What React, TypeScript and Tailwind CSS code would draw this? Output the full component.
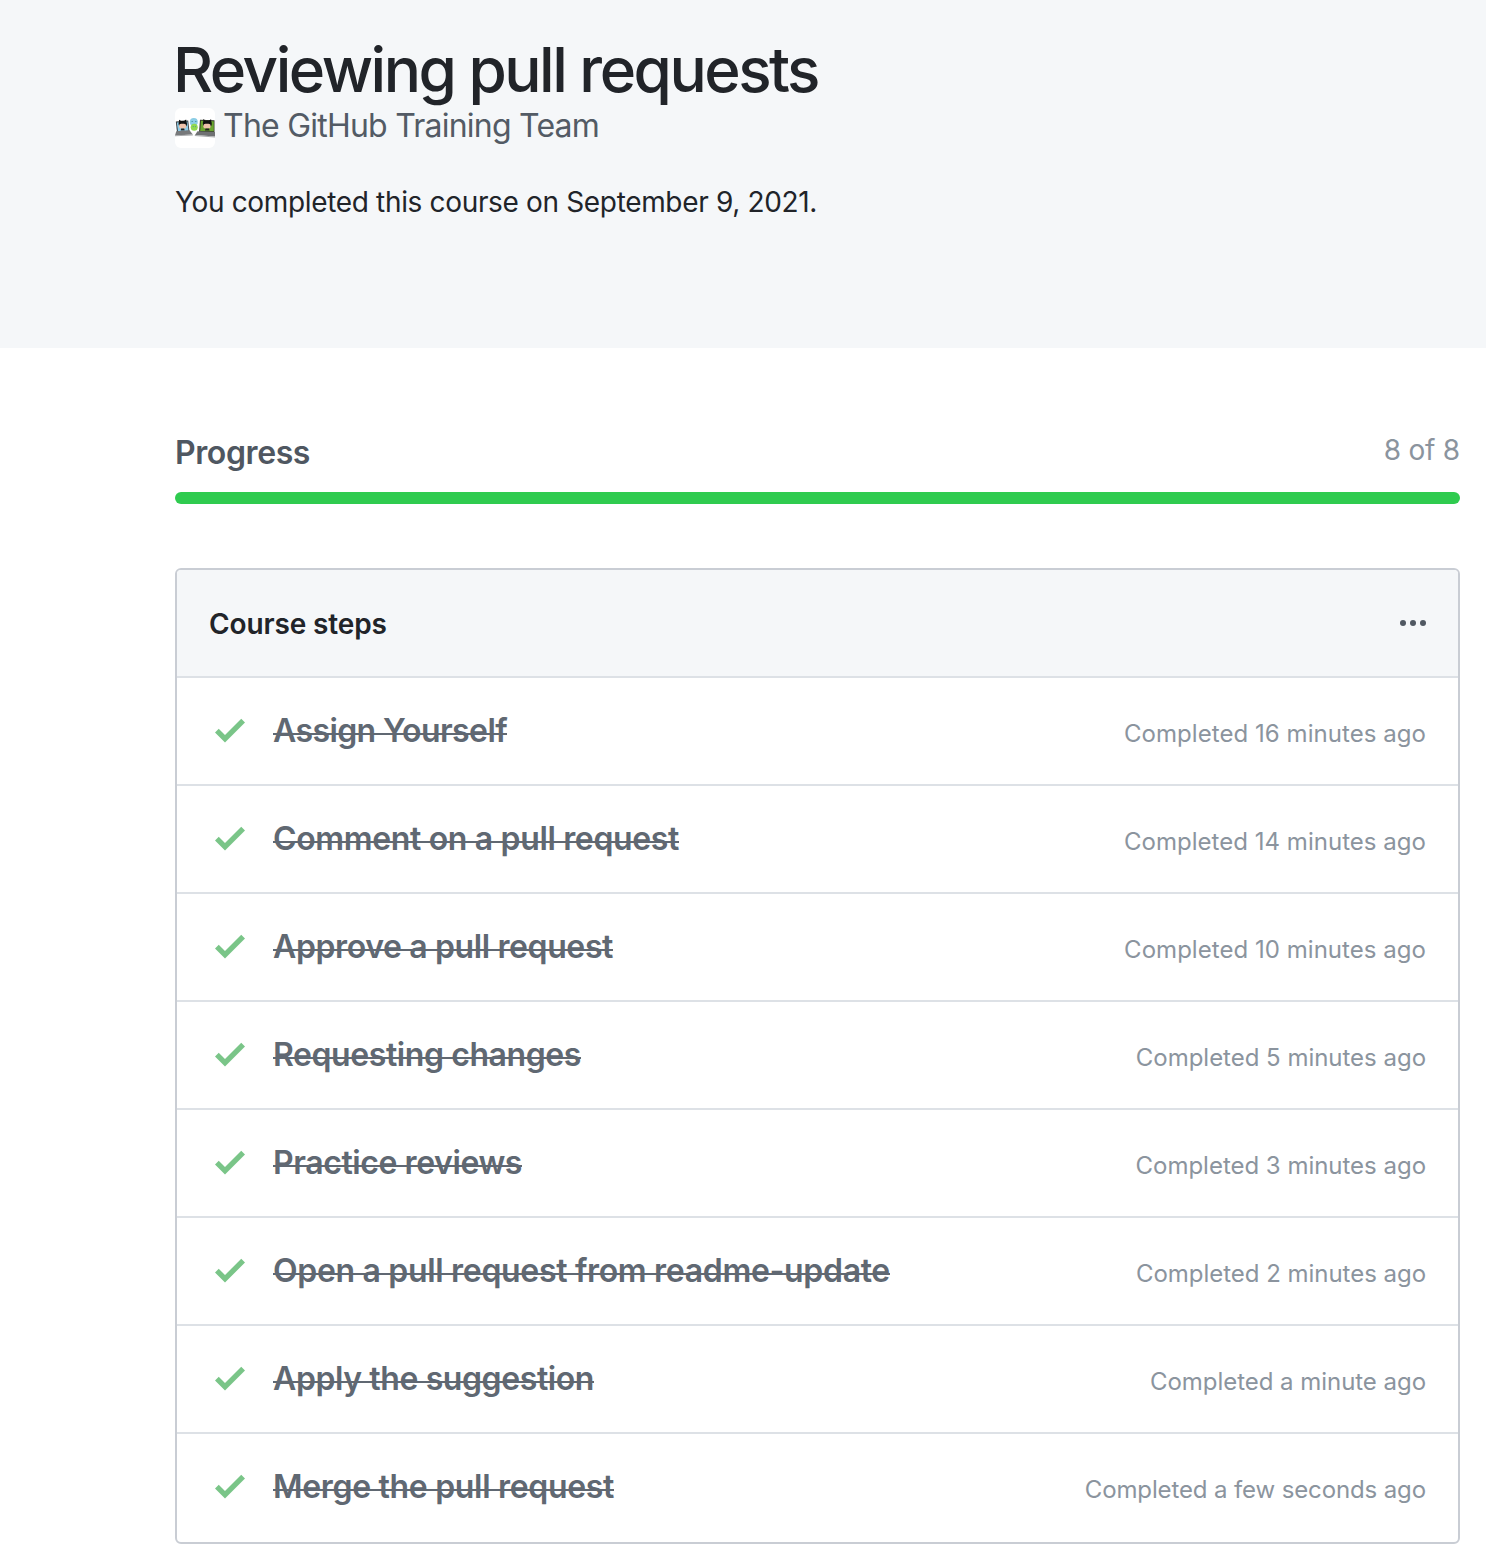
type Step = { title: string; tracking: string; completed: string; timeTracking: string };

const steps: Step[] = [
  { title: "Assign Yourself", tracking: "tracking-[-0.6px]", completed: "Completed 16 minutes ago", timeTracking: "tracking-[0.053px]" },
  { title: "Comment on a pull request", tracking: "tracking-[-0.351px]", completed: "Completed 14 minutes ago", timeTracking: "tracking-[0.03px]" },
  { title: "Approve a pull request", tracking: "tracking-[-0.381px]", completed: "Completed 10 minutes ago", timeTracking: "tracking-[0.04px]" },
  { title: "Requesting changes", tracking: "tracking-[-0.415px]", completed: "Completed 5 minutes ago", timeTracking: "tracking-[-0.02px]" },
  { title: "Practice reviews", tracking: "tracking-[-0.42px]", completed: "Completed 3 minutes ago", timeTracking: "tracking-[-0.02px]" },
  { title: "Open a pull request from readme-update", tracking: "tracking-[-0.319px]", completed: "Completed 2 minutes ago", timeTracking: "tracking-[-0.029px]" },
  { title: "Apply the suggestion", tracking: "tracking-[-0.406px]", completed: "Completed a minute ago", timeTracking: "tracking-[-0.04px]" },
  { title: "Merge the pull request", tracking: "tracking-[-0.32px]", completed: "Completed a few seconds ago", timeTracking: "tracking-[-0.12px]" },
];

function CheckIcon() {
  return (
    <svg viewBox="0 0 12 16" className="h-10 w-[30px] shrink-0 fill-[#7ac588]" aria-hidden="true">
      <path d="M12 5l-8 8-4-4 1.5-1.5L4 10l6.5-6.5L12 5z" />
    </svg>
  );
}

function TeamAvatar() {
  return (
    <svg viewBox="0 0 40 40" className="h-10 w-10 shrink-0 rounded-md bg-white" aria-hidden="true">
      <path d="M.8 13.6l12.4-1.2 1.3 11.6-12.4 1z" fill="#3b3f42" />
      <path d="M1.8 14.5l10.6-1 1.1 9.2-10.5.8z" fill="#8fcbe6" />
      <path d="M4 13.7l0-2 2 1.1h3.2l1.9-1.3.4 2.2c1 1.8.5 4.2-.8 5.1H4.9c-1.3-1-1.8-3.4-.9-5.1z" fill="#111" />
      <rect x="4" y="15.8" width="7.2" height="4.8" rx="2.2" fill="#efc3ab" />
      <path d="M6.2 20.6h3l.5 1.9H5.7z" fill="#222" />
      <path d="M1.2 23.2l13.3-1 3.3 4.4-17.8.9z" fill="#77797b" />
      <path d="M0 27.3l17.8-.7v.9L0 28.3z" fill="#a9abad" />
      <circle cx="18.8" cy="14" r="4" fill="#8bcde5" />
      <circle cx="19.2" cy="19.2" r="3.5" fill="#91d94e" />
      <path d="M16.5 13.5h1.5M20 13.5h1.5M17.8 18.6h1M20 18.6h1" stroke="#438b9f" strokeWidth=".8" />
      <path d="M25 11.8l14.5.4v12.3L24 24z" fill="#343b2c" />
      <path d="M26 12.8l12.8.4v10l-13.6-.3z" fill="#69a52f" />
      <path d="M28.3 13.2l0-2.1 2.2 1.3h3.4l2.2-1.1.2 2.2c1 2 .4 4.6-1 5.5h-5.6c-1.7-1-2.4-3.9-1.4-5.8z" fill="#111" />
      <rect x="28.3" y="15.7" width="7.4" height="4.8" rx="2.2" fill="#efc3ab" />
      <path d="M30.5 20.5h3.4l.6 2h-4.6z" fill="#222" />
      <path d="M22.5 23.2l17.5.8v4.4l-20-1.3z" fill="#6f7173" />
      <path d="M19.8 27l20.2 1.4v1l-20.2-1.3z" fill="#a9abad" />
    </svg>
  );
}

export default function App() {
  return (
    <div className="min-h-[1564px] bg-white font-['Inter',sans-serif] text-[#212429]">
      <header className="h-[348px] bg-[#f5f7f9] pl-[175px] pt-8">
        <h1 className="-ml-0.5 text-[62px] font-medium leading-[76px] tracking-[-2.5px]">Reviewing pull requests</h1>
        <div className="flex gap-2 text-[#535b65]">
          <TeamAvatar />
          <span className="pt-px text-[32px] leading-[34px] tracking-[-0.77px]">The GitHub Training Team</span>
        </div>
        <p className="mt-[33px] text-[28px] leading-[42px] tracking-[-0.34px]">You completed this course on September 9, 2021.</p>
      </header>

      <main className="ml-[175px] w-[1285px] pt-[82px]">
        <div className="flex items-start justify-between">
          <h2 className="text-[32px] font-semibold leading-[46px] tracking-[-0.4px] text-[#4f5761]">Progress</h2>
          <span className="text-[28px] leading-10 tracking-[-0.2px] text-[#8b949e]">8 of 8</span>
        </div>
        <div className="mt-4 h-3 rounded-md bg-[#2fcb4f]" />

        <section className="mt-16 overflow-hidden rounded-md border-2 border-[#c9cdd4]">
          <div className="flex h-[106px] items-center justify-between bg-[#f5f7f9] px-8">
            <h3 className="pt-0.5 text-[28px] font-semibold leading-[42px] tracking-[-0.13px]">Course steps</h3>
            <svg viewBox="0 0 26 6" className="h-1.5 w-[26px] fill-[#505862]" aria-hidden="true">
              <circle cx="3" cy="3" r="3" />
              <circle cx="13" cy="3" r="3" />
              <circle cx="23" cy="3" r="3" />
            </svg>
          </div>
          <ul>
            {steps.map((s) => (
              <li key={s.title} className="flex h-[108px] items-start border-t-2 border-[#dde1e6] pl-[38px] pr-8 pt-8 last:h-[110px]">
                <CheckIcon />
                <span className={`ml-7 text-[32px] font-semibold leading-[42px] text-[#606872] underline decoration-2 underline-offset-[-9px] [text-decoration-skip-ink:none] ${s.tracking}`}>{s.title}</span>
                <span className={`ml-auto pt-0.5 text-2xl leading-[44px] text-[#8b949e] ${s.timeTracking}`}>{s.completed}</span>
              </li>
            ))}
          </ul>
        </section>
      </main>
    </div>
  );
}
